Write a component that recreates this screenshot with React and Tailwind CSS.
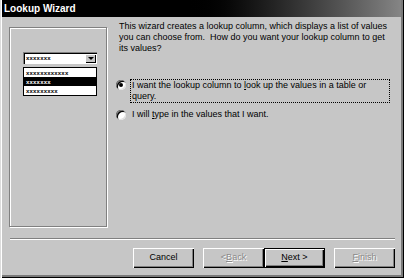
import React from 'react'

const font = { fontFamily: '"Liberation Sans", Arial, sans-serif' }

function Radio({ checked }) {
  return (
    <div className="relative w-[10px] h-[10px] rounded-full bg-white shrink-0 shadow-[inset_1px_1px_0_#808080,inset_-1px_-1px_0_#e0e0e0,inset_2px_2px_0_#000]">
      {checked && <div className="absolute left-[3px] top-[3px] w-[4px] h-[4px] rounded-full bg-black" />}
    </div>
  )
}

function Button({ children, disabled, isDefault }) {
  const bevel = 'shadow-[inset_1px_1px_0_#fff,inset_-1px_-1px_0_#000,inset_-2px_-2px_0_#808080]'
  return (
    <div className={`w-[61px] h-[20px] ${isDefault ? 'border border-black' : ''}`}>
      <div className={`w-full h-full flex items-center justify-center text-[9px] ${bevel} ${disabled ? 'text-[#8a8a8a] [text-shadow:1px_1px_0_#fff]' : 'text-black'}`}>
        {children}
      </div>
    </div>
  )
}

function Xs({ n }) {
  return <span className="font-bold text-[6px] leading-none tracking-[0.2px]">{'x'.repeat(n)}</span>
}

export default function App() {
  return (
    <div
      className="w-[404px] h-[278px] bg-[#c6c6c6] flex flex-col pl-[2px] pr-[3px] pb-[3px] shadow-[inset_1px_0_0_#dcdcdc,inset_2px_0_0_#fff,inset_-1px_-1px_0_#000,inset_-3px_-3px_0_#7a7a7a]"
      style={font}
    >
      {/* barre de titre */}
      <div className="h-[17px] shrink-0 flex items-center pl-[2px] bg-linear-to-r from-black from-45% to-[#858585]">
        <span className="text-white font-bold text-[10px]">Lookup Wizard</span>
      </div>

      {/* contenu */}
      <div className="flex items-start pl-[7px] pt-[4px]">
        <div className="mt-[6px] w-[98px] h-[200px] shrink-0 border border-[#808080] shadow-[1px_1px_0_#fff,inset_1px_1px_0_#fff] pl-[13px] pt-[24px]">
          <div className="w-[74px] h-[12px] bg-white flex items-center justify-between shadow-[inset_1px_1px_0_#808080,inset_2px_2px_0_#000] pl-[3px] pr-[1px]">
            <Xs n={7} />
            <div className="w-[11px] h-[9px] mt-[1px] bg-[#c6c6c6] flex items-center justify-center shadow-[inset_1px_1px_0_#fff,inset_-1px_-1px_0_#000]">
              <div className="w-0 h-0 border-l-[3px] border-r-[3px] border-t-[3px] border-l-transparent border-r-transparent border-t-black" />
            </div>
          </div>
          <div className="mt-[3px] w-[74px] h-[29px] bg-white border border-black flex flex-col">
            <div className="h-[9px] flex items-center pl-[2px]"><Xs n={12} /></div>
            <div className="h-[9px] flex items-center pl-[2px] bg-black text-white"><Xs n={7} /></div>
            <div className="h-[9px] flex items-center pl-[2px]"><Xs n={9} /></div>
          </div>
        </div>

        <div className="ml-[9px] w-[276px] text-[9px] leading-[11px] text-black whitespace-nowrap">
          <p className="pl-[3px]">
            This wizard creates a lookup column, which displays a list of values<br />
            you can choose from.&nbsp; How do you want your lookup column to get<br />
            its values?
          </p>

          <div className="mt-[25px] flex items-start">
            <div className="mt-[1px]"><Radio checked /></div>
            <div className="ml-[4px] w-[260px] border border-dotted border-black pl-[1px]">
              I want the lookup column to <u>l</u>ook up the values in a table or<br />
              query.
            </div>
          </div>

          <div className="mt-[6px] flex items-start">
            <div className="mt-[1px]"><Radio /></div>
            <div className="ml-[6px]">I will <u>t</u>ype in the values that I want.</div>
          </div>
        </div>
      </div>

      {/* séparateur */}
      <div className="mt-[11px] ml-[8px] mr-[6px] h-[2px] border-t border-t-[#808080] border-b border-b-white" />

      {/* boutons */}
      <div className="mt-[8px] flex justify-end pr-[6px]">
        <Button>Cancel</Button>
        <div className="w-[9px]" />
        <Button disabled>&lt; <u>B</u>ack</Button>
        <Button isDefault><u>N</u>ext &gt;</Button>
        <div className="w-[9px]" />
        <Button disabled><u>F</u>inish</Button>
      </div>
    </div>
  )
}
